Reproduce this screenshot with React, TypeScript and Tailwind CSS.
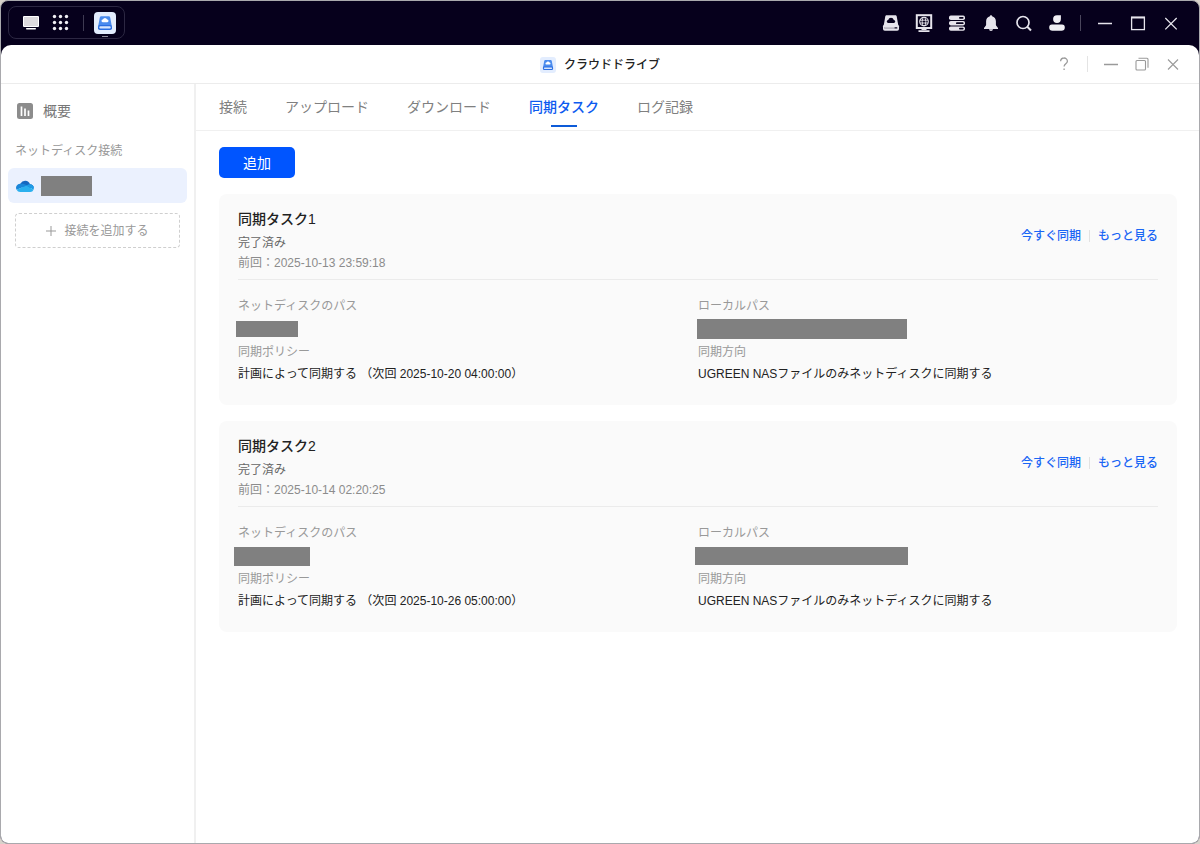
import type { ReactNode } from "react"

const tabs = ["接続", "アップロード", "ダウンロード", "同期タスク", "ログ記録"]

const tasks = [
  {
    title: "同期タスク1",
    last: "2025-10-13 23:59:18",
    next: "2025-10-20 04:00:00",
    remoteMask: "-ml-0.5 w-[62px] h-4",
    localMask: "-ml-px w-[210px] h-5",
  },
  {
    title: "同期タスク2",
    last: "2025-10-14 02:20:25",
    next: "2025-10-26 05:00:00",
    remoteMask: "-ml-1 w-[76px] h-[19px]",
    localMask: "-ml-[3px] w-[213px] h-[18px]",
  },
]

function DriveIcon({ className }: { className?: string }) {
  return (
    <svg viewBox="0 0 22 22" className={className} aria-hidden="true">
      <rect width="22" height="22" rx="4" fill="#e3edfe" />
      <path d="M7.400 4.200h7.200a1.600 1.600 0 0 1 1.600 1.300L17.800 14H4.200l1.600-8.500a1.600 1.600 0 0 1 1.600-1.300z" fill="#4a8bee" />
      <rect x="4" y="13" width="14" height="5" rx="1.800" fill="#2a6ee2" />
      <rect x="5.300" y="14.300" width="11.400" height="2.200" rx="1" fill="#d6e5fd" />
      <path d="M8.700 10.200a1.300 1.300 0 0 1 .2-2.600 2.200 2.200 0 0 1 4.200 0 1.300 1.300 0 0 1 .2 2.600z" fill="#fff" />
    </svg>
  )
}

function CloudIcon() {
  return (
    <svg viewBox="0 0 18 12" className="h-3 w-[18px]" aria-hidden="true">
      <path d="M4.500 3.600A5.200 5.200 0 0 1 14 4.200a4 4 0 0 1 3.800 3.600L10 9 3 6z" fill="#1668c0" />
      <path d="M4.200 3.800a4 4 0 0 0-3.600 6L11 5.500C9 4 6.500 3.400 4.200 3.800z" fill="#1a86d9" />
      <path d="M10.500 5.600C12 4.400 13 4.100 14.200 4.200a3.900 3.900 0 0 1 3.300 5.500z" fill="#1f9be6" />
      <path d="M.6 9.800 10.500 5.500l7 4.200A3.600 3.600 0 0 1 14.300 12H4.200A4.100 4.100 0 0 1 .6 9.800z" fill="#2bb0ee" />
    </svg>
  )
}

function BarButton({ label, children }: { label: string; children: ReactNode }) {
  return (
    <button type="button" aria-label={label} className="shrink-0">
      <svg viewBox="0 0 18 18" className="block size-[18px]" fill="none" stroke="#e6e4ec" strokeWidth="1.3">
        {children}
      </svg>
    </button>
  )
}

function WindowButton({ label, children }: { label: string; children: ReactNode }) {
  return (
    <button type="button" aria-label={label} className="shrink-0">
      <svg viewBox="0 0 16 16" className="block size-4" fill="none" stroke="#9a9a9a" strokeWidth="1.1">
        {children}
      </svg>
    </button>
  )
}

function TopBar() {
  return (
    <header className="flex h-11 items-start justify-between pl-[7px] pr-[19px]">
      <div className="mt-[5px] flex h-[33px] items-center rounded-lg border border-[#2c2742] pl-3.5 pr-2">
        <button type="button" aria-label="デスクトップ">
          <svg viewBox="0 0 16 16" className="block size-4">
            <rect y="1" width="16" height="11" rx="1" fill="#fff" />
            <rect x="1" y="2" width="14" height="9" fill="#dcdadd" />
            <rect x="3" y="13" width="10" height="1.500" rx=".7" fill="#fff" />
          </svg>
        </button>
        <button type="button" aria-label="アプリ" className="ml-[13px]">
          <svg viewBox="0 0 18 18" className="block size-[18px]" fill="#f0eff4">
            {[2.5, 8.5, 14.5].map((y) =>
              [2.5, 8.5, 14.5].map((x) => <circle key={`${x}-${y}`} cx={x} cy={y} r="1.700" />)
            )}
          </svg>
        </button>
        <span className="ml-[13px] h-4 w-px bg-[#3e3a52]" />
        <button type="button" aria-label="クラウドドライブ" className="relative ml-2.5">
          <DriveIcon className="block size-[22px]" />
          <span className="absolute -bottom-[3px] left-2 h-px w-1.5 bg-[#8f8c9c]" />
        </button>
      </div>

      <div className="mt-[13px] flex items-center gap-[15px]">
        <BarButton label="ストレージ">
          <g stroke="none">
            <path
              d="M4.700 1.200h8.600c.8 0 1.200.4 1.400 1.100L16.200 11H1.800l1.500-8.700c.2-.7.600-1.100 1.400-1.100zM6.300 9h5.400a1.500 1.500 0 0 0 .1-3 2.900 2.900 0 0 0-5.600 0A1.500 1.500 0 0 0 6.300 9z"
              fill="#e6e4ec"
              fillRule="evenodd"
            />
            <rect x="1" y="10.500" width="16" height="6.200" rx="1.800" fill="#e6e4ec" />
            <rect x="2.600" y="13.200" width="12.800" height="1.400" rx=".6" fill="#06001c" />
            <rect x="3" y="13.200" width="9.600" height="1.400" fill="#e6e4ec" />
          </g>
        </BarButton>
        <BarButton label="リモートアクセス">
          <rect x="1.800" y="1.200" width="14.400" height="12.800" strokeWidth="2" />
          <circle cx="9" cy="7.600" r="4.300" strokeWidth="1.100" />
          <ellipse cx="9" cy="7.600" rx="1.800" ry="4.300" strokeWidth=".9" />
          <path d="M4.800 6.200h8.400M4.800 9h8.400" strokeWidth=".9" />
          <path d="M6.500 15.300h5" strokeWidth="1.400" />
          <path d="M3.500 17.100h11" strokeWidth="1.600" />
        </BarButton>
        <BarButton label="タスク">
          <g stroke="none">
            {[1.6, 7, 12.4].map((y, i) => (
              <g key={y}>
                <rect x="1" y={y} width="16" height="4.400" rx="1.800" fill="#e6e4ec" />
                <rect x={i === 1 ? 8 : 11} y={y + 1.3} width={i === 1 ? 7.6 : 4.6} height="1.800" rx=".9" fill="#06001c" />
              </g>
            ))}
          </g>
        </BarButton>
        <BarButton label="通知">
          <path
            d="M10 1.200c.7 0 1.100.5 1.100 1.100 2.200.6 3.800 2.500 3.800 5v3.900l2.100 2.900v.8H3v-.8l2.100-2.900V7.300c0-2.500 1.600-4.400 3.800-5 0-.6.4-1.100 1.100-1.100zM8 15.300h4c-.2 1.100-.9 1.700-2 1.700s-1.800-.6-2-1.700z"
            fill="#e6e4ec"
            stroke="none"
          />
        </BarButton>
        <BarButton label="検索">
          <circle cx="9" cy="8.500" r="6" strokeWidth="1.700" />
          <path d="m13.300 12.800 3.700 3.700" strokeWidth="2" />
        </BarButton>
        <BarButton label="ユーザー">
          <path
            d="M10 1.200h3.900v3.900A3.900 3.900 0 1 1 10 1.200zM5 10.600h10a2.800 2.800 0 0 1 2.800 2.900c0 2.300-1.200 3.300-3.300 3.300h-9c-2.100 0-3.300-1-3.300-3.300A2.800 2.800 0 0 1 5 10.600z"
            fill="#f0eff4"
            stroke="none"
          />
        </BarButton>
        <span className="h-4 w-px bg-[#4a465c]" />
        <BarButton label="最小化">
          <path d="M2 9.500h14" strokeWidth="1.500" />
        </BarButton>
        <BarButton label="最大化">
          <rect x="2.600" y="3.200" width="12.800" height="12.400" />
          <path d="M2 3.700h14" strokeWidth="1.800" />
        </BarButton>
        <BarButton label="閉じる">
          <path d="m3.300 4 11.400 11.400M14.700 4 3.300 15.400" />
        </BarButton>
      </div>
    </header>
  )
}

function TitleBar() {
  return (
    <div className="grid h-[39px] grid-cols-[1fr_auto_1fr] items-center border-b border-[#ececec] pr-[18px]">
      <span />
      <h1 className="flex items-center gap-2 pl-[18px] pt-px text-xs font-medium text-[#222]">
        <DriveIcon className="size-4" />
        クラウドドライブ
      </h1>
      <div className="flex items-center justify-end gap-[15px]">
        <WindowButton label="ヘルプ">
          <path d="M4.600 5.200A3.400 3.400 0 0 1 8 2a3.300 3.300 0 0 1 3.400 3.200c0 2.400-3.300 2.700-3.300 5.200M8.100 12.400v1.700" strokeWidth="1.300" />
        </WindowButton>
        <span className="h-4 w-px bg-[#e4e4e4]" />
        <WindowButton label="ウィンドウを最小化">
          <path d="M1 8.500h14" strokeWidth="1.300" />
        </WindowButton>
        <WindowButton label="元のサイズに戻す">
          <rect x="2" y="4.500" width="9.500" height="9.500" rx="1" />
          <path d="M4.500 2.200H13a1 1 0 0 1 1 1v8.500" />
        </WindowButton>
        <WindowButton label="ウィンドウを閉じる">
          <path d="m3 3.500 10 10M13 3.500l-10 10" />
        </WindowButton>
      </div>
    </div>
  )
}

function Sidebar() {
  return (
    <aside className="w-[195px] shrink-0 border-r-2 border-[#f0f0f0] px-[7px] pt-[17px]">
      <a href="#overview" className="flex h-5 items-center gap-2.5 pl-[9px] text-sm text-[#777]">
        <svg viewBox="0 0 16 16" className="size-4" aria-hidden="true">
          <rect width="16" height="16" rx="2.500" fill="#8c8c8c" />
          <path d="M4.500 3.500v9.500M8 5.500V13M11.500 7.500V13" stroke="#fff" strokeWidth="1.700" />
        </svg>
        概要
      </a>
      <h2 className="mt-5 pl-[7px] text-xs leading-5 text-[#999]">ネットディスク接続</h2>
      <a href="#onedrive" aria-label="OneDrive" className="mt-[7px] flex h-[35px] items-center gap-[7px] rounded-md bg-[#ebf1fe] pl-2">
        <CloudIcon />
        <span className="h-5 w-[51px] bg-[#808080]" />
      </a>
      <button
        type="button"
        className="mx-[7px] mt-2.5 flex h-[35px] w-[165px] items-center justify-center gap-2 rounded border border-dashed border-[#cfcfcf] text-xs text-[#999]"
      >
        <svg viewBox="0 0 10 10" className="size-2.5" stroke="#999" aria-hidden="true">
          <path d="M0 5h10M5 0v10" />
        </svg>
        接続を追加する
      </button>
    </aside>
  )
}

function TaskCard({ task }: { task: (typeof tasks)[number] }) {
  return (
    <article className="rounded-lg bg-[#fafafa] px-[19px] pb-[21px] pt-[15px] text-xs leading-5">
      <div className="flex justify-between border-b border-[#ebebeb] pb-1.5">
        <div>
          <h3 className="text-sm font-medium leading-5 text-[#222]">{task.title}</h3>
          <p className="mt-1 text-[#666]">完了済み</p>
          <p className="text-[#8c8c8c]">前回：{task.last}</p>
        </div>
        <div className="flex h-[54px] items-center gap-2 font-medium text-[#1a66f5]">
          <button type="button">今すぐ同期</button>
          <span className="h-3 w-px bg-[#e2e2e2]" />
          <button type="button">もっと見る</button>
        </div>
      </div>

      <dl className="grid grid-cols-2 pt-4">
        <div>
          <dt className="text-[#999]">ネットディスクのパス</dt>
          <dd className="flex h-[26px] items-center">
            <span className={`bg-[#808080] ${task.remoteMask}`} />
          </dd>
          <dt className="text-[#999]">同期ポリシー</dt>
          <dd className="mt-0.5 text-[#222]">計画によって同期する （次回 {task.next}）</dd>
        </div>
        <div>
          <dt className="text-[#999]">ローカルパス</dt>
          <dd className="flex h-[26px] items-center">
            <span className={`bg-[#808080] ${task.localMask}`} />
          </dd>
          <dt className="text-[#999]">同期方向</dt>
          <dd className="mt-0.5 text-[#222]">UGREEN NASファイルのみネットディスクに同期する</dd>
        </div>
      </dl>
    </article>
  )
}

function App() {
  return (
    <div className="bg-[#d8d2cb] font-['Liberation_Sans','Noto_Sans_CJK_JP',sans-serif]">
      <div className="flex min-h-screen flex-col overflow-hidden rounded-lg border border-[#a9a9ad] bg-[#06001c]">
        <TopBar />
        <div className="flex grow flex-col rounded-t-[10px] bg-white">
          <TitleBar />
          <div className="flex grow">
            <Sidebar />
            <main className="min-w-0 grow">
              <nav className="flex h-[47px] gap-[38px] border-b border-[#f0f0f0] pl-[23px] text-sm">
                {tabs.map((tab) => {
                  const active = tab === "同期タスク"
                  return (
                    <button
                      key={tab}
                      type="button"
                      className={`relative h-[46px] ${active ? "font-medium text-[#0d5bf0]" : "text-[#808080]"}`}
                    >
                      {tab}
                      {active && (
                        <span className="absolute bottom-[3px] left-1/2 h-0.5 w-[26px] -translate-x-1/2 bg-[#0d5bd8]" />
                      )}
                    </button>
                  )
                })}
              </nav>
              <div className="pb-6 pl-[23px] pr-[22px] pt-4">
                <button type="button" className="block h-[31px] w-[76px] rounded-[5px] bg-[#0055ff] text-sm text-white">
                  追加
                </button>
                <div className="mt-4 flex flex-col gap-4">
                  {tasks.map((task) => (
                    <TaskCard key={task.title} task={task} />
                  ))}
                </div>
              </div>
            </main>
          </div>
        </div>
      </div>
    </div>
  )
}

export default App
